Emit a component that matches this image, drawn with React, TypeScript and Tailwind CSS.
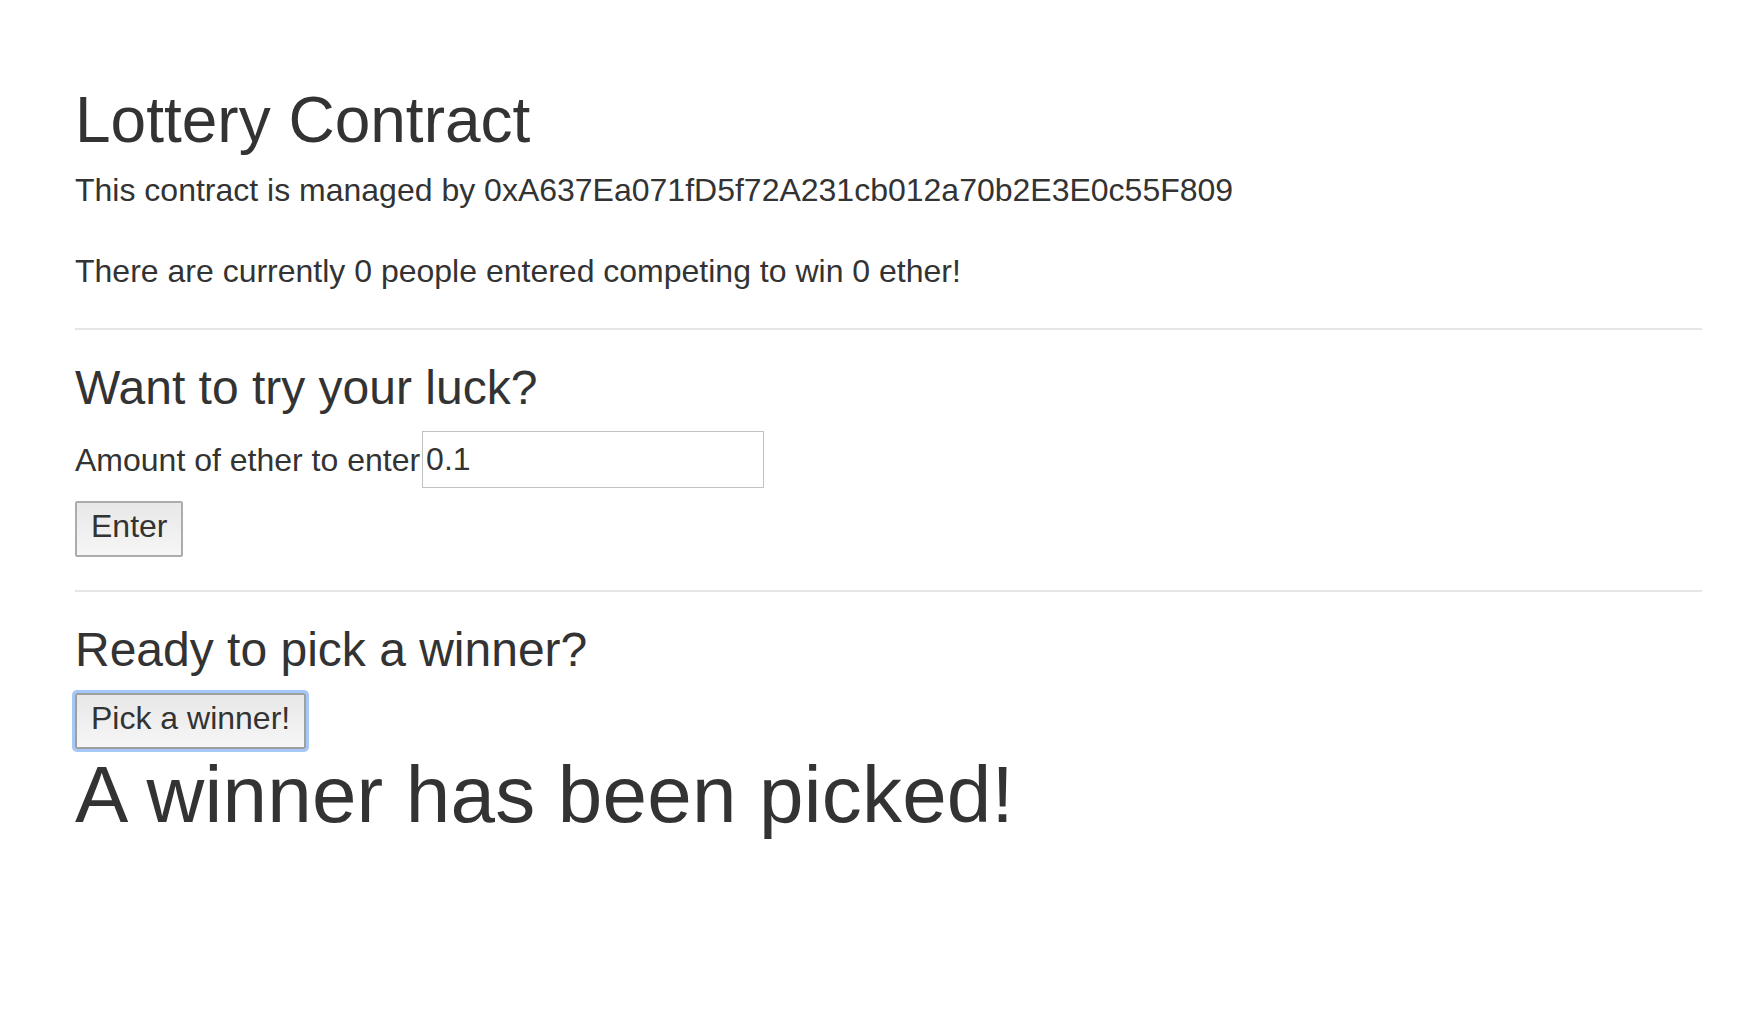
import React, { useState } from 'react';

const manager = '0xA637Ea071fD5f72A231cb012a70b2E3E0c55F809';

const Divider = ({ className = '' }: { className?: string }) => (
  <div className={`h-[2px] w-full bg-[#e6e6e6] ${className}`} />
);

const App: React.FC = () => {
  const [amount, setAmount] = useState('0.1');
  const players = 0;
  const balance = 0;

  return (
    <div className="min-h-screen bg-white pl-[75px] pr-[44px] pt-[84px] font-['Liberation_Sans',Arial,sans-serif] text-[#333333]">
      <h1 className="text-[64px] leading-[72px] font-normal">Lottery Contract</h1>
      <p className="mt-[16px] text-[32px] leading-[36px]">This contract is managed by {manager}</p>
      <p className="mt-[45px] text-[32px] leading-[36px]">
        There are currently {players} people entered competing to win {balance} ether!
      </p>

      <Divider className="mt-[39px]" />

      <form onSubmit={(e) => e.preventDefault()}>
        <h2 className="mt-[30px] text-[48px] leading-[56px] font-normal">Want to try your luck?</h2>
        <div className="mt-[15px] flex items-center">
          <label className="text-[32px] leading-[36px]">Amount of ether to enter</label>
          <input
            value={amount}
            onChange={(e) => setAmount(e.target.value)}
            className="ml-[2px] h-[57px] w-[342px] border border-[#c2c2c2] bg-white px-[3px] text-[32px] leading-[36px] text-[#333333] outline-none"
          />
        </div>
        <button
          type="submit"
          className="mt-[13px] block rounded-[2px] border-2 border-[#acacac] bg-gradient-to-b from-[#e8e8e8] to-[#f6f6f6] px-[14px] pt-[5px] pb-[11px] text-[32px] leading-[36px] text-[#333333]"
        >
          Enter
        </button>
      </form>

      <Divider className="mt-[33px]" />

      <h2 className="mt-[30px] text-[48px] leading-[56px] font-normal">Ready to pick a winner?</h2>
      <button className="mt-[15px] block rounded-[2px] border-2 border-[#9f9f9f] bg-gradient-to-b from-[#e8e8e8] to-[#f6f6f6] px-[14px] pt-[5px] pb-[11px] text-[32px] leading-[36px] text-[#333333] shadow-[0_0_0_3px_#a5c8f6]">
        Pick a winner!
      </button>
      <h1 className="text-[80px] leading-[92px] font-normal tracking-[0.2px]">A winner has been picked!</h1>
    </div>
  );
};

export default App;
